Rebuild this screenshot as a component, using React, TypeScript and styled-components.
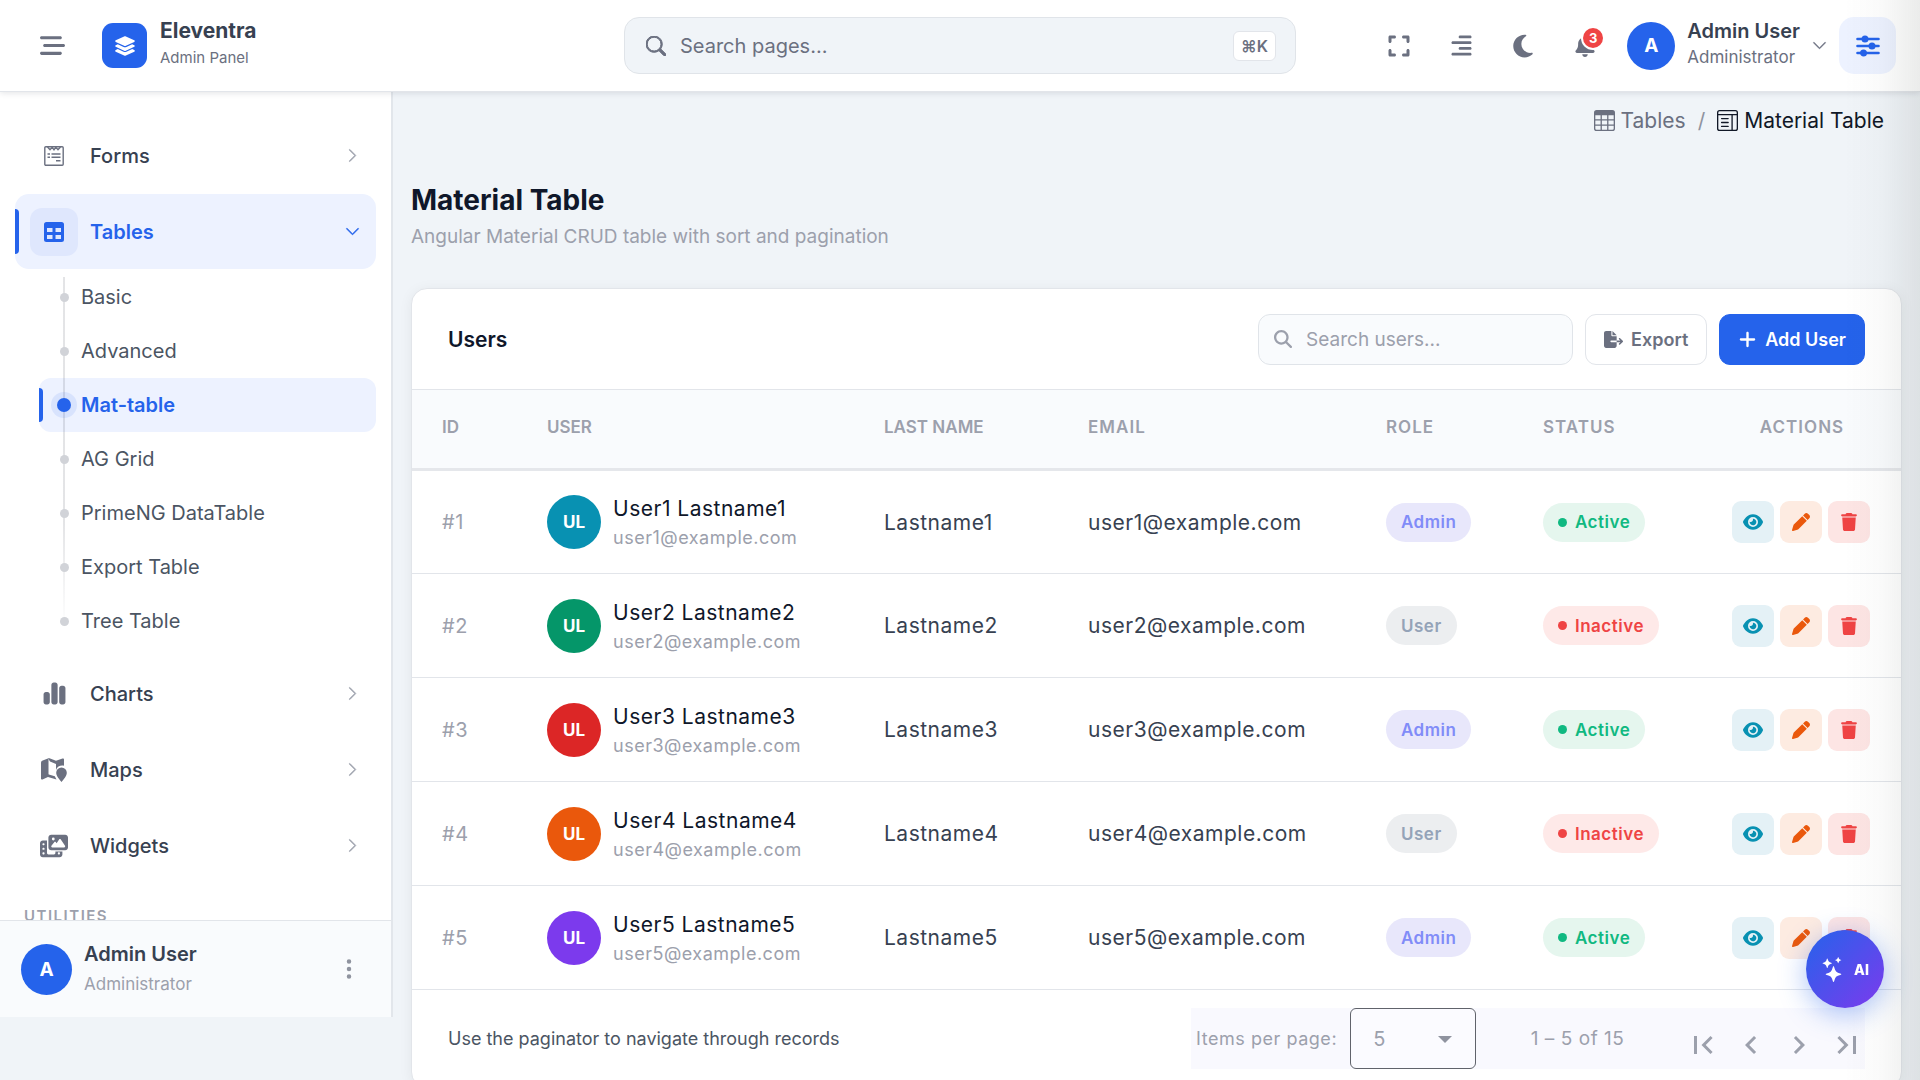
import React from "react";
import styled, { createGlobalStyle } from "styled-components";
import {
  FaBarsStaggered, FaLayerGroup, FaExpand, FaAlignRight, FaMoon, FaBell, FaChartSimple,
  FaPhotoFilm, FaEye, FaPen, FaTrash, FaFileExport, FaMagnifyingGlass, FaPlus,
} from "react-icons/fa6";
import {
  BsChevronRight, BsChevronDown, BsTable, BsLayoutTextWindow, BsSearch, BsStars, BsThreeDotsVertical,
} from "react-icons/bs";
import { MdFirstPage, MdChevronLeft, MdChevronRight, MdLastPage } from "react-icons/md";

const Global = createGlobalStyle`
  *, *::before, *::after { box-sizing: border-box; }
  body { margin: 0; background: #f0f4f8; font-family: Inter, "Liberation Sans", sans-serif; color: #374151; font-size: 20px; }
  html, body { height: 100%; overflow: hidden; }
  #root { height: 100%; }
  button, input, select { font: inherit; color: inherit; margin: 0; }
  button { border: 0; padding: 0; background: none; display: flex; align-items: center; justify-content: center; cursor: pointer; flex: none; }
  a { color: inherit; text-decoration: none; }
  h1, h2, p, ul { margin: 0; padding: 0; list-style: none; }
  svg { display: block; flex: none; }
`;

const Page = styled.div`
  height: 100vh;
  display: grid;
  grid-template: 92px minmax(0, 1fr) / 393px minmax(0, 1fr);
`;

const Header = styled.header`
  grid-column: 1 / -1;
  display: grid;
  grid-template-columns: 1fr 672px 1fr;
  align-items: center;
  padding: 0 24px;
  background: #fff;
  border-bottom: 1px solid #e2e5ea;
  box-shadow: 0 1px 6px rgba(15, 23, 42, 0.12);
  position: relative;
  z-index: 1;
  color: #6b7080;
`;

const HeaderStart = styled.div`display: flex; align-items: center; gap: 30px; padding-left: 8px;`;
const IconButton = styled.button`width: 40px; height: 56px; color: #6b7080; position: relative;`;
const Brand = styled.a`display: flex; align-items: center; gap: 13px;`;
const Logo = styled.span`
  width: 45px; height: 45px; border-radius: 11px; background: #2563eb; color: #fff;
  display: grid; place-items: center;
`;
const Stack = styled.span`display: flex; flex-direction: column; text-align: left;`;
const HeaderStack = styled(Stack)`padding-bottom: 4px;`;
const SideStack = styled(Stack)`gap: 4px;`;
const BrandName = styled.span`font-weight: 700; font-size: 21px; line-height: 28px; color: #374151;`;
const Small = styled.span<{ $light?: boolean; $size?: number }>`
  font-size: ${(p) => p.$size ?? 15}px; line-height: 26px; color: ${(p) => (p.$light ? "#9ca0ac" : "#6b7080")};
`;

const SearchBox = styled.label`
  height: 57px; display: flex; align-items: center; gap: 14px; padding: 0 19px 0 21px;
  border: 1px solid #e0e4e9; border-radius: 15px; background: #f0f4f8;
  input {
    flex: 1; min-width: 0; border: 0; background: none; outline: 0; font-size: 20px; padding: 0;
    &::placeholder { color: #6b7080; opacity: 1; }
  }
  kbd {
    font: 600 16px/28px Inter, "DejaVu Sans", sans-serif; padding: 0 7px; border-radius: 6px; background: #fff;
    border: 1px solid #e2e5ea;
  }
`;

const HeaderEnd = styled.div`display: flex; align-items: center; justify-content: flex-end; gap: 22px;`;
const Count = styled.span`
  position: absolute; left: 18px; top: 10px; width: 20px; height: 20px; border-radius: 50%;
  background: #ef4444; color: #fff; font-size: 13px; font-weight: 700; line-height: 20px; text-align: center;
  box-shadow: 0 0 0 2px #fff;
`;
const Profile = styled.button`gap: 12px; color: #6b7080;`;
const UserName = styled.span`font-weight: 600; font-size: 20px; line-height: 26px; color: #374151;`;
const Avatar = styled.span<{ $size: number; $color?: string; $font?: number }>`
  width: ${(p) => p.$size}px; height: ${(p) => p.$size}px; border-radius: 50%; flex: none;
  display: grid; place-items: center; background: ${(p) => p.$color ?? "#2563eb"}; color: #fff;
  font-weight: 700; font-size: ${(p) => p.$font ?? 19}px; letter-spacing: 0;
`;
const ProfileGroup = styled.div`display: flex; align-items: center; gap: 12px;`;
const SettingsButton = styled.button`
  width: 57px; height: 57px; border-radius: 15px; background: #edf2ff; color: #2563eb;
`;

const Sidebar = styled.aside`
  height: calc(100% - 63px); display: flex; flex-direction: column; background: #fff;
  border-right: 2px solid #e2e6eb;
`;
const Nav = styled.nav`flex: 1; min-height: 0; overflow: hidden; padding: 26px 15px 0;`;
const NavItem = styled.a<{ $active?: boolean }>`
  position: relative; display: flex; align-items: center; height: 75px; margin-bottom: 1px; padding: 0 16px 0 15px;
  font-weight: ${(p) => (p.$active ? 600 : 500)}; font-size: 20px; border-radius: 14px;
  color: ${(p) => (p.$active ? "#2563eb" : "#374151")};
  background: ${(p) => (p.$active ? "#edf2ff" : "none")};
  > span:nth-of-type(2) { flex: 1; }
  > svg { color: ${(p) => (p.$active ? "#2563eb" : "#9ca0ac")}; }
  ${(p) => p.$active && `&::before {
    content: ""; position: absolute; left: 0; top: 15px; bottom: 15px; width: 4px;
    background: #2563eb; border-radius: 0 4px 4px 0;
  }`}
`;
const NavIcon = styled.span<{ $active?: boolean }>`
  width: 48px; height: 48px; border-radius: 12px; display: grid; place-items: center; margin-right: 12px;
  background: ${(p) => (p.$active ? "#dfe7fd" : "none")}; color: ${(p) => (p.$active ? "#2563eb" : "#6b7080")};
`;
const SubList = styled.ul`
  position: relative; padding-left: 24px; margin-bottom: 8px;
  &::before {
    content: ""; position: absolute; left: 48px; top: 7px; bottom: 20px; width: 2px; z-index: 1;
    background: linear-gradient(rgba(60, 65, 80, 0.14) 70%, transparent);
  }
`;
const SubItem = styled.a<{ $active?: boolean }>`
  position: relative; display: flex; align-items: center; height: 54px; padding-left: 21px; gap: 12px; border-radius: 12px;
  font-size: 20px; font-weight: ${(p) => (p.$active ? 600 : 400)};
  color: ${(p) => (p.$active ? "#2563eb" : "#4b5563")}; background: ${(p) => (p.$active ? "#edf2ff" : "none")};
  ${(p) => p.$active && `padding-left: 18px; gap: 10px; &::after {
    content: ""; position: absolute; left: 0; top: 10px; bottom: 10px; width: 4px;
    background: #2563eb; border-radius: 0 4px 4px 0;
  }`}
`;
const Dot = styled.i<{ $active?: boolean }>`
  position: relative; z-index: 2; border-radius: 50%; width: ${(p) => (p.$active ? 14 : 9)}px; height: ${(p) => (p.$active ? 14 : 9)}px;
  background: ${(p) => (p.$active ? "#2563eb" : "#d1d3d8")};
  box-shadow: ${(p) => (p.$active ? "0 0 0 6px rgba(37, 99, 235, 0.1)" : "none")};
`;
const SectionTitle = styled.p`
  padding: 22px 9px; font-size: 15px; line-height: 20px; font-weight: 600; letter-spacing: 0.1em; color: #9ca0ac;
`;
const SideFooter = styled.div`
  height: 97px; display: flex; align-items: center; gap: 12px; padding: 0 30px 0 21px;
  border-top: 1px solid #e2e5ea; background: #f9fbfd;
  > button { margin-left: auto; color: #8f939f; }
`;

const Main = styled.main`padding: 0 18px;`;
const Crumbs = styled.nav`
  display: flex; justify-content: flex-end; align-items: center; gap: 12px; height: 56px; padding-right: 18px;
  font-size: 21px; color: #8f939f;
  a { display: flex; align-items: center; gap: 6px; color: #6b7080; }
  a[aria-current] { color: #111827; }
`;
const Title = styled.h1`&& { margin-top: 34px; } font-size: 28px; line-height: 36px; font-weight: 700; color: #0f172a;`;
const Subtitle = styled.p`&& { margin-top: 5px; } font-size: 19px; line-height: 28px; color: #9ca0ac;`;
const Card = styled.section`
  margin-top: 37px; background: #fff; border: 1px solid #e2e5ea; border-radius: 16px;
  box-shadow: 0 2px 14px rgba(15, 23, 42, 0.06); overflow: hidden;
`;
const CardHead = styled.div`
  height: 100px; padding: 0 36px; display: flex; align-items: center; gap: 12px;
  h2 { flex: 1; font-size: 21px; font-weight: 600; color: #0f172a; }
`;
const UserSearch = styled(SearchBox)`
  width: 315px; height: 51px; border-radius: 12px; padding: 0 15px; background: #f9fbfd; color: #9ca0ac;
  input { font-size: 19px; &::placeholder { color: #9ca0ac; } }
`;
const Button = styled.button<{ $primary?: boolean }>`
  height: 51px; padding: 0 18px; gap: 8px; border-radius: 11px; font-size: 18px; font-weight: 600;
  border: 1px solid ${(p) => (p.$primary ? "#2563eb" : "#e2e5ea")};
  background: ${(p) => (p.$primary ? "#2563eb" : "#fff")}; color: ${(p) => (p.$primary ? "#fff" : "#6b7080")};
`;

const Table = styled.table`
  width: 100%; table-layout: fixed; border-collapse: collapse; text-align: left; letter-spacing: 0.025em;
  th, td { padding: 0 0 0 29px; }
  th {
    height: 80px; padding-bottom: 4px; background: #f9fbfd; border-top: 1px solid #e2e5ea; border-bottom: 3px solid #e5e7eb;
    font-size: 17px; font-weight: 600; color: #9ca0ac; letter-spacing: 0.06em;
  }
  th:nth-child(-n + 3) { letter-spacing: 0; }
  th:first-child, td:first-child { padding-left: 30px; }
  th:last-child { padding-left: 0; text-align: center; }
  td { height: 104px; border-bottom: 1px solid #e2e5ea; font-size: 21px; color: #374151; }
  td:first-child { font-size: 20px; color: #9ca0ac; }
`;
const Person = styled.div`display: flex; align-items: center; gap: 12px;`;
const PersonName = styled.span`font-size: 21px; line-height: 32px; color: #0f172a;`;
const Tag = styled.span<{ $bg: string; $fg: string }>`
  display: inline-flex; align-items: center; gap: 8px; height: 39px; padding: 0 15px; border-radius: 20px;
  background: ${(p) => p.$bg}; color: ${(p) => p.$fg}; font-size: 17px; font-weight: 600; vertical-align: middle;
  i { width: 9px; height: 9px; border-radius: 50%; background: currentColor; }
`;
const Actions = styled.div`display: flex; gap: 6px;`;
const Action = styled.button<{ $bg: string; $fg: string }>`
  width: 42px; height: 42px; border-radius: 9px; background: ${(p) => p.$bg}; color: ${(p) => p.$fg};
`;

const CardFoot = styled.div`
  height: 97px; padding: 0 36px; display: flex; justify-content: space-between; align-items: center;
  font-size: 18px; color: #4b5563;
`;
const Paginator = styled.div`
  width: 674px; height: 61px; display: flex; align-items: center; padding: 0 0 0 5px; background: #f9f9fe; color: #9ca0ac;
  letter-spacing: 0.03em;
`;
const SizeLabel = styled.label`display: flex; align-items: center; gap: 13px; white-space: nowrap;`;
const SelectWrap = styled.span`
  position: relative; display: block;
  select {
    appearance: none; width: 126px; height: 61px; border: 1px solid #60636b; border-radius: 6px; background: #fbfbff;
    padding: 0 22px; font-size: 20px; color: #9ca0ac;
  }
  &::after {
    content: ""; position: absolute; right: 24px; top: 28px; border: 7px solid transparent; border-top-color: #8f939f;
    border-bottom: 0; pointer-events: none;
  }
`;
const Range = styled.span`flex: 1; text-align: center; font-size: 19px;`;
const Pages = styled.div`
  display: flex; align-self: flex-end; color: #9ca0ac; margin-right: -6px;
  button { width: 48px; height: 48px; }
`;

const AiButton = styled.button`
  position: fixed; right: 36px; bottom: 72px; width: 78px; height: 78px; border-radius: 50%; gap: 8px; z-index: 3;
  background: linear-gradient(135deg, #2563eb, #7c3aed); color: #fff; font-size: 14px; font-weight: 800;
  box-shadow: 0 6px 28px rgba(37, 99, 235, 0.4);
`;
const EdgeShade = styled.div`
  position: fixed; inset: 0 0 0 auto; width: 76px; z-index: 2; pointer-events: none;
  background: linear-gradient(to right, transparent, rgba(30, 40, 30, 0.025) 50%, rgba(30, 40, 30, 0.09));
`;

const FormIcon = () => (
  <svg width="20" height="20" viewBox="0 0 20 20" fill="none" stroke="currentColor" strokeWidth="1.4">
    <rect x="0.8" y="0.8" width="18.4" height="18.4" rx="1" />
    <path d="M3.500 1l2.500 2.800L8.200 1.300 10 3.800l1.800-2.500L14 3.800 16.500 1M3.500 8h2.500M7.500 8h9M3.500 11.200h2.500M7.500 11.200h9M12 14.800h4.500" />
  </svg>
);
const GridIcon = () => (
  <svg width="20" height="20" viewBox="0 0 20 20">
    <path fill="currentColor" fillRule="evenodd" d="M2.500 0h15A2.500 2.500 0 0 1 20 2.500v15a2.500 2.500 0 0 1-2.500 2.500h-15A2.500 2.500 0 0 1 0 17.500v-15A2.500 2.500 0 0 1 2.500 0zM3 6v4h5.500V6zm8.500 0v4H17V6zM3 13v4h5.500v-4zm8.500 0v4H17v-4z" />
  </svg>
);
const MapIcon = () => (
  <svg width="26" height="24" viewBox="0 0 26 24" fill="currentColor">
    <path d="M0 4.500c0-.8.400-1.400 1.100-1.700L7.500.300v18.500L1.500 21.500c-.8.300-1.500-.2-1.500-1z" />
    <path d="M7 .3h1.500l6.500 2.400L21.500.500c.8-.3 1.500.1 1.500.9v6.400c-3.300-.8-6.800.6-8 4.200V6L9 3.500z" />
    <path d="M7 16.300l6.800 2 1.700 3.200L7 18.900z" />
    <path d="M20.500 9.500a5.300 5.300 0 0 0-5.300 5.300c0 3 3.300 7 5.300 9.200 2-2.200 5.300-6.200 5.300-9.200a5.300 5.300 0 0 0-5.300-5.300z" />
  </svg>
);
const SlidersIcon = () => (
  <svg width="24" height="22" viewBox="0 0 24 22" fill="currentColor" stroke="currentColor" strokeWidth="2.600" strokeLinecap="round">
    <path d="M1.500 4h21M1.500 11h21M1.500 18h21" />
    <circle cx="9" cy="4" r="2.200" /><circle cx="16" cy="11" r="2.200" /><circle cx="7.500" cy="18" r="2.200" />
  </svg>
);

const subItems = ["Basic", "Advanced", "Mat-table", "AG Grid", "PrimeNG DataTable", "Export Table", "Tree Table"];
const lowerItems = [
  { label: "Charts", icon: <FaChartSimple size={25} /> },
  { label: "Maps", icon: <MapIcon /> },
  { label: "Widgets", icon: <FaPhotoFilm size={28} /> },
];
const users = ["#0891b2", "#059669", "#dc2626", "#ea580c", "#7c3aed"].map((color, i) => ({
  id: i + 1, color, admin: i % 2 === 0, active: i % 2 === 0,
}));
const columns: [string, number | undefined][] = [
  ["ID", 106], ["User", 337], ["Last Name", 204], ["Email", 298], ["Role", 157], ["Status", 189], ["Actions", undefined],
];

export default function App() {
  return (
    <>
      <Global />
      <Page>
        <Header>
          <HeaderStart>
            <IconButton aria-label="Toggle menu"><FaBarsStaggered size={25} /></IconButton>
            <Brand href="#">
              <Logo><FaLayerGroup size={22} /></Logo>
              <HeaderStack><BrandName>Eleventra</BrandName><Small>Admin Panel</Small></HeaderStack>
            </Brand>
          </HeaderStart>
          <SearchBox>
            <BsSearch size={20} strokeWidth={0.8} />
            <input type="search" aria-label="Search pages" placeholder="Search pages..." />
            <kbd>⌘K</kbd>
          </SearchBox>
          <HeaderEnd>
            <IconButton aria-label="Full screen"><FaExpand size={24} /></IconButton>
            <IconButton aria-label="Text direction"><FaAlignRight size={23} /></IconButton>
            <IconButton aria-label="Dark mode"><FaMoon size={26} /></IconButton>
            <IconButton aria-label="Notifications"><FaBell size={22} /><Count>3</Count></IconButton>
            <ProfileGroup>
              <Profile>
                <Avatar $size={48}>A</Avatar>
                <HeaderStack><UserName>Admin User</UserName><Small $size={17}>Administrator</Small></HeaderStack>
                <BsChevronDown size={15} strokeWidth={0.5} />
              </Profile>
              <SettingsButton aria-label="Settings"><SlidersIcon /></SettingsButton>
            </ProfileGroup>
          </HeaderEnd>
        </Header>

        <Sidebar>
          <Nav aria-label="Main">
            <NavItem href="#"><NavIcon><FormIcon /></NavIcon><span>Forms</span><BsChevronRight size={15} strokeWidth={0.6} /></NavItem>
            <NavItem href="#" $active>
              <NavIcon $active><GridIcon /></NavIcon><span>Tables</span><BsChevronDown size={15} strokeWidth={0.6} />
            </NavItem>
            <SubList>
              {subItems.map((name) => {
                const active = name === "Mat-table";
                return <li key={name}><SubItem href="#" $active={active}><Dot $active={active} />{name}</SubItem></li>;
              })}
            </SubList>
            {lowerItems.map((item) => (
              <NavItem href="#" key={item.label}>
                <NavIcon>{item.icon}</NavIcon><span>{item.label}</span><BsChevronRight size={15} strokeWidth={0.6} />
              </NavItem>
            ))}
            <SectionTitle>UTILITIES</SectionTitle>
          </Nav>
          <SideFooter>
            <Avatar $size={51}>A</Avatar>
            <SideStack><UserName>Admin User</UserName><Small $light $size={17}>Administrator</Small></SideStack>
            <button aria-label="Account options"><BsThreeDotsVertical size={24} /></button>
          </SideFooter>
        </Sidebar>

        <Main>
          <Crumbs aria-label="Breadcrumb">
            <a href="#"><BsTable size={21} />Tables</a>
            <span>/</span>
            <a href="#" aria-current="page"><BsLayoutTextWindow size={21} />Material Table</a>
          </Crumbs>
          <Title>Material Table</Title>
          <Subtitle>Angular Material CRUD table with sort and pagination</Subtitle>
          <Card>
            <CardHead>
              <h2>Users</h2>
              <UserSearch>
                <FaMagnifyingGlass size={18} />
                <input type="search" aria-label="Search users" placeholder="Search users..." />
              </UserSearch>
              <Button><FaFileExport size={19} />Export</Button>
              <Button $primary><FaPlus size={19} />Add User</Button>
            </CardHead>
            <Table>
              <colgroup>{columns.map(([name, width]) => <col key={name} width={width} />)}</colgroup>
              <thead><tr>{columns.map(([name]) => <th key={name}>{name.toUpperCase()}</th>)}</tr></thead>
              <tbody>
                {users.map((u) => (
                  <tr key={u.id}>
                    <td>#{u.id}</td>
                    <td>
                      <Person>
                        <Avatar $size={54} $color={u.color} $font={17}>UL</Avatar>
                        <Stack>
                          <PersonName>User{u.id} Lastname{u.id}</PersonName>
                          <Small $light $size={18}>user{u.id}@example.com</Small>
                        </Stack>
                      </Person>
                    </td>
                    <td>Lastname{u.id}</td>
                    <td>user{u.id}@example.com</td>
                    <td>{u.admin ? <Tag $bg="#e8e7fb" $fg="#818cf8">Admin</Tag> : <Tag $bg="#eceef0" $fg="#94a3b8">User</Tag>}</td>
                    <td>{u.active ? <Tag $bg="#e5f6ee" $fg="#10b981"><i />Active</Tag> : <Tag $bg="#fee9e8" $fg="#ef4444"><i />Inactive</Tag>}</td>
                    <td>
                      <Actions>
                        <Action aria-label="View" $bg="#e4f1f6" $fg="#0891b2"><FaEye size={20} /></Action>
                        <Action aria-label="Edit" $bg="#fdebe1" $fg="#ea580c"><FaPen size={18} /></Action>
                        <Action aria-label="Delete" $bg="#fde5e4" $fg="#ef4444"><FaTrash size={18} /></Action>
                      </Actions>
                    </td>
                  </tr>
                ))}
              </tbody>
            </Table>
            <CardFoot>
              <span>Use the paginator to navigate through records</span>
              <Paginator>
                <SizeLabel>
                  Items per page:
                  <SelectWrap><select defaultValue="5"><option>5</option><option>10</option><option>15</option></select></SelectWrap>
                </SizeLabel>
                <Range>1 – 5 of 15</Range>
                <Pages>
                  <button aria-label="First page"><MdFirstPage size={36} /></button>
                  <button aria-label="Previous page"><MdChevronLeft size={36} /></button>
                  <button aria-label="Next page"><MdChevronRight size={36} /></button>
                  <button aria-label="Last page"><MdLastPage size={36} /></button>
                </Pages>
              </Paginator>
            </CardFoot>
          </Card>
        </Main>
      </Page>
      <EdgeShade />
      <AiButton><BsStars size={25} />AI</AiButton>
    </>
  );
}
